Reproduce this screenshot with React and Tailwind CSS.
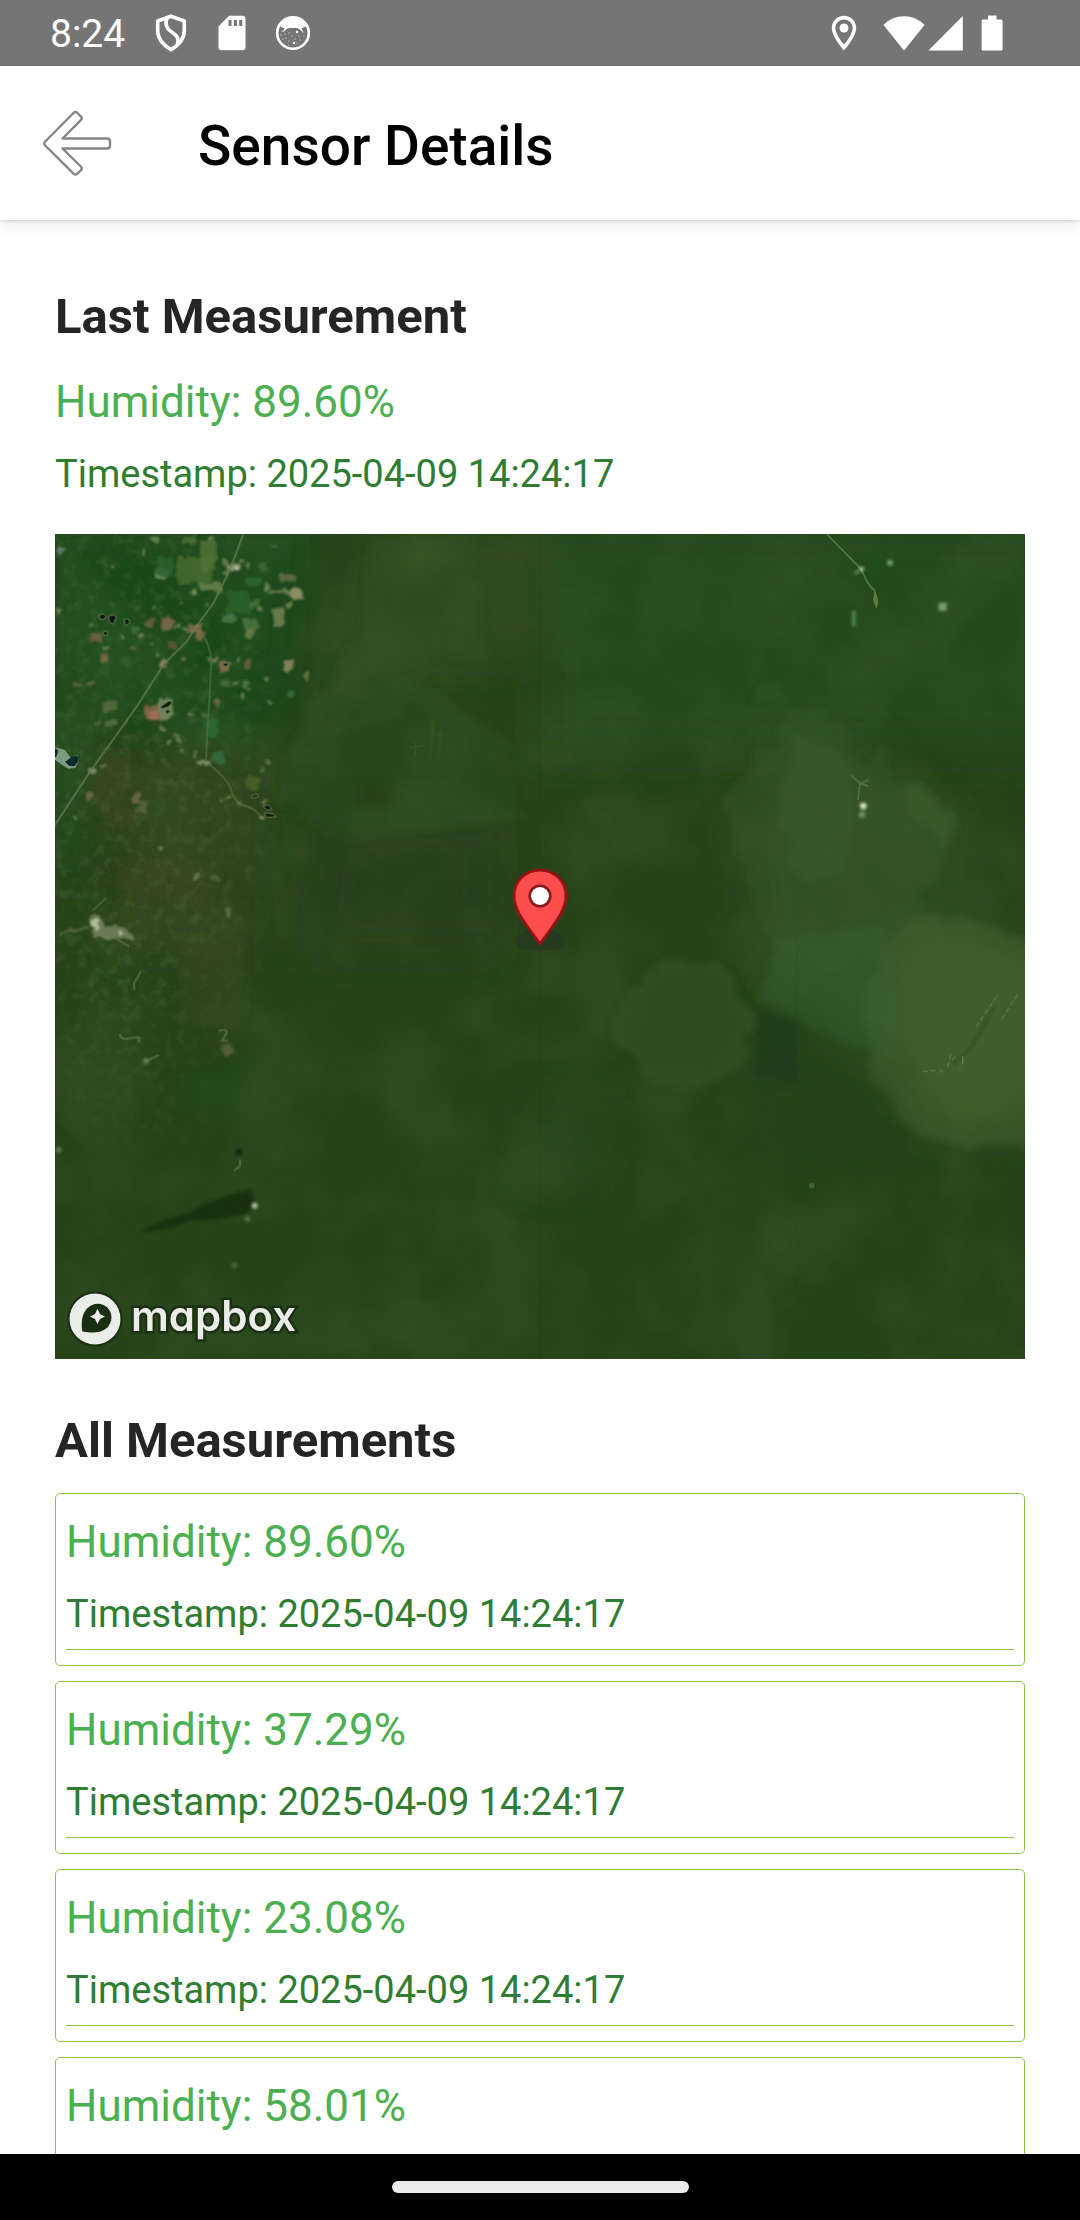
import React from "react";

const READINGS = [
  { humidity: "89.60%", timestamp: "2025-04-09 14:24:17" },
  { humidity: "37.29%", timestamp: "2025-04-09 14:24:17" },
  { humidity: "23.08%", timestamp: "2025-04-09 14:24:17" },
  { humidity: "58.01%", timestamp: "2025-04-09 14:24:17" },
];

function StatusBar() {
  return (
    <div className="flex h-[66px] shrink-0 items-center justify-between bg-[#757575] pr-[76px] pl-[50px] text-white">
      <div className="flex items-center">
        <span className="pt-[2px] text-[39px] leading-[48px]">8:24</span>
        <svg className="ml-[30px] h-[38px] w-[32px]" viewBox="0 0 32 38" fill="none" stroke="currentColor" strokeWidth="3.6" strokeLinejoin="round">
          <path d="M16 2.2 29.3 7v9.5c0 8-5.300 14.500-13.300 19.200C8 31 2.700 24.500 2.700 16.500V7z" />
          <path d="M12 4c-2 5-1.500 9.500 4 13.500 5.500 4 8.500 6 6.500 12.500" />
        </svg>
        <svg className="ml-[31px] h-[36px] w-[28px]" viewBox="0 0 28 36" fill="currentColor">
          <path fillRule="evenodd" d="M11 .8h13.500a3 3 0 0 1 3 3v28.400a3 3 0 0 1-3 3h-21a3 3 0 0 1-3-3V11.500zM10.500 5v6h3V5zm5.400 0v6h3V5zm5.300 0v6h3V5z" />
        </svg>
        <svg className="ml-[29px] h-[36px] w-[36px]" viewBox="0 0 36 36" fill="currentColor">
          <circle cx="18" cy="18" r="15.800" fill="none" stroke="currentColor" strokeWidth="2.600" />
          <path d="M5 11C8 4 13 2 18 2s10 2 13 9c-1.500 1.500-3 2-4.500 2l1.700 4.500-4-3.500c-2.500-1.500-4-1-6.200-1s-3.700-.500-6.200 1l-4 3.500L9.500 13C8 13 6.500 12.500 5 11z" />
          {[[7, 16], [6, 20], [10, 19], [14, 18], [11, 23], [8, 24], [14, 26], [17, 21], [20, 24], [24, 21], [28, 17], [29, 21], [25, 25], [22, 28], [14, 30]].map(([x, y]) => (
            <circle key={x + "-" + y} cx={x} cy={y} r="0.6" />
          ))}
          <circle cx="22" cy="17" r="1.200" />
          <circle cx="19" cy="28" r="1.200" />
        </svg>
      </div>
      <div className="flex items-center">
        <svg className="h-[36px] w-[26px]" viewBox="0 0 26 36" fill="currentColor">
          <path fillRule="evenodd" d="M13 .8C6.300.800.800 6.100.800 12.900.800 21.900 13 35.300 13 35.300s12.200-13.400 12.200-22.400C25.200 6.100 19.700.800 13 .8zm0 3.600c4.900 0 8.600 3.800 8.600 8.500 0 5.300-5.500 12.800-8.600 16.700-3.100-3.900-8.600-11.400-8.600-16.700 0-4.700 3.700-8.500 8.600-8.500z" />
          <circle cx="13" cy="13" r="4.500" />
        </svg>
        <svg className="ml-[26px] h-[36px] w-[42px]" viewBox="0 0 42 36" fill="currentColor">
          <path d="M.5 10C6 4.500 13 1.200 21 1.200S36 4.500 41.500 10L21 35.500z" />
        </svg>
        <svg className="ml-[3px] h-[36px] w-[35px]" viewBox="0 0 35 36" fill="currentColor">
          <path d="M.5 35.500 34.800 1v34.500z" />
        </svg>
        <svg className="mr-[1px] ml-[18px] h-[36px] w-[22px]" viewBox="0 0 22 36" fill="currentColor">
          <path d="M7 .5h8.500v4H20a1.600 1.600 0 0 1 1.600 1.600v27.800a1.600 1.600 0 0 1-1.600 1.600H2.200a1.600 1.600 0 0 1-1.600-1.600V6.100a1.600 1.600 0 0 1 1.600-1.600H7z" />
        </svg>
      </div>
    </div>
  );
}

function Header() {
  return (
    <header className="z-10 flex h-[154px] shrink-0 items-center bg-white pl-[42px] shadow-[0_1px_3px_rgba(0,0,0,0.16),0_6px_16px_rgba(0,0,0,0.07)]">
      <button type="button" aria-label="Back" className="block">
        <svg className="h-[68px] w-[70px]" viewBox="0 0 70 68" fill="#fff" stroke="#868686" strokeWidth="2.400" strokeLinejoin="round">
          <path d="M3.200 32.500 31.500 4q2-2 4 0l3.300 3.300q1.800 1.900 0 3.800L20.500 29.500H65q3 0 3 3v4q0 3-3 3H20.500L38.800 57.500q1.800 1.900 0 3.800l-3.300 3.300q-2 2-4 0L3.200 36.500q-2-2 0-4z" />
        </svg>
      </button>
      <h1 className="ml-[86px] pt-[6px] text-[55px] leading-[64px] font-medium text-black">Sensor Details</h1>
    </header>
  );
}

// Fields, clearings and settlements: [x, y, width, height, colour]
const NW_FIELDS = [
  [412, 110, 105, 82, "#46692f"], [425, 45, 50, 28, "#4d7034"], [480, 60, 48, 90, "#4f7134"], [478, 188, 72, 24, "#66804b"], [345, 150, 35, 30, "#7c9068"],
  [350, 115, 50, 55, "#2f6130"], [560, 128, 46, 26, "#8f9678"], [582, 134, 16, 14, "#d2cdb7"], [660, 130, 24, 26, "#41683a"], [715, 165, 52, 18, "#5f6f42"],
  [752, 205, 36, 36, "#93966a"], [690, 208, 70, 12, "#6d8050"], [675, 195, 14, 18, "#789060"], [700, 265, 34, 52, "#6f8052"], [630, 240, 26, 22, "#42713b"],
  [608, 295, 44, 36, "#4b7240"], [616, 325, 28, 26, "#6a7c4a"], [540, 282, 46, 22, "#47794a"], [616, 170, 50, 28, "#2f6630"], [560, 210, 70, 70, "#275f2a"],
  [450, 208, 16, 18, "#7d935e"], [312, 295, 28, 24, "#6f5c3b"], [362, 297, 38, 28, "#7d6848"], [443, 310, 48, 30, "#8a6b4e"], [468, 335, 28, 24, "#8a6b4e"],
  [150, 335, 34, 34, "#6e5f3e"], [182, 400, 24, 28, "#7a6a45"], [385, 362, 28, 24, "#5d5a38"], [262, 380, 24, 14, "#6b6341"], [360, 420, 22, 22, "#96856a"],
  [540, 424, 30, 32, "#8d6f4c"], [612, 422, 24, 26, "#6f6140"], [732, 420, 32, 30, "#87855e"], [545, 482, 30, 20, "#4d6b40"], [794, 456, 12, 24, "#7f8255"],
  [100, 488, 22, 12, "#5b6340"], [136, 488, 26, 12, "#6a6a43"], [188, 545, 42, 28, "#546b3f"], [162, 600, 20, 14, "#4e673c"], [194, 600, 38, 20, "#587145"],
  [312, 555, 50, 40, "#846646"], [360, 535, 38, 60, "#768a62"], [330, 572, 26, 22, "#a1705a"], [524, 535, 18, 26, "#6b6a44"], [498, 598, 34, 55, "#2e6a32"],
  [604, 482, 22, 26, "#4c7a45"], [735, 514, 24, 20, "#357041"], [356, 616, 14, 20, "#5a7045"], [410, 648, 16, 24, "#6c7c4c"], [476, 722, 36, 14, "#839273"],
  [512, 694, 42, 32, "#35683a"], [275, 818, 28, 30, "#6b6747"], [292, 846, 26, 34, "#59643f"], [138, 815, 16, 24, "#6d6843"], [142, 742, 24, 20, "#829078"],
  [655, 892, 18, 14, "#99a37b"], [620, 770, 38, 44, "#485f27"], [558, 1160, 14, 30, "#5b714c"], [512, 1066, 28, 18, "#50683c"], [272, 318, 24, 20, "#3e6d42"],
  [500, 408, 34, 16, "#7b7d55"], [484, 576, 26, 18, "#4c6c3e"], [694, 72, 16, 10, "#4e7542"], [50, 85, 20, 20, "#64816a"], [335, 52, 16, 14, "#64834b"],
];

const NW_WATER = [
  "M178 285l12-4 8 8-6 10-12-2z", "M206 288l16-4 6 8-8 20-10-4z", "M252 298l12-2 6 12-12 8z", "M190 335l10-2 4 10-10 4z", "M362 560l26-18 8 6-10 12-20 6z", "M376 572l10-4 4 8-10 6z",
  "M550 430l12-2 2 8-12 4z", "M636 826l16-4 2 8-18 4z", "M670 858l16-4 10 14-14 2z", "M674 878l26 4 8 8-28 2z",
];

// Small specks of cleared land: [x, y]
const NW_SPECKS = [
  [205, 132], [415, 240], [492, 248], [336, 258], [240, 342], [300, 345], [330, 370], [345, 398], [420, 412], [190, 372], [148, 310], [404, 318], [430, 322], [590, 415], [672, 470], [600, 525],
  [680, 545], [376, 656], [398, 640], [418, 686], [460, 695], [620, 500], [600, 115], [614, 128], [550, 120], [552, 155], [540, 830], [560, 826], [598, 846], [100, 885], [352, 982], [460, 1066],
  [674, 720], [660, 745], [510, 45], [300, 90], [652, 260], [742, 250], [580, 488], [360, 625], [448, 575], [185, 735], [670, 838], [48, 265],
];

function SatelliteImage() {
  return (
    <svg className="block h-full w-full" viewBox="0 0 970 825" preserveAspectRatio="xMidYMid slice" role="img" aria-label="Satellite map of the sensor location">
      <defs>
        <filter id="haze" x="-50%" y="-50%" width="200%" height="200%"><feGaussianBlur stdDeviation="60" /></filter>
        <filter id="soft" x="-20%" y="-20%" width="140%" height="140%"><feGaussianBlur stdDeviation="12" /></filter>
        <filter id="edge" x="-10%" y="-10%" width="120%" height="120%"><feGaussianBlur stdDeviation="5" /></filter>
        <filter id="fields" x="-5%" y="-5%" width="110%" height="110%">
          <feTurbulence type="fractalNoise" baseFrequency="0.11" numOctaves="3" seed="5" result="n" />
          <feDisplacementMap in="SourceGraphic" in2="n" scale="9" xChannelSelector="R" yChannelSelector="G" />
          <feGaussianBlur stdDeviation="1" />
        </filter>
        <filter id="rough" x="-10%" y="-10%" width="120%" height="120%">
          <feTurbulence type="fractalNoise" baseFrequency="0.035" numOctaves="3" seed="9" result="n" />
          <feDisplacementMap in="SourceGraphic" in2="n" scale="24" xChannelSelector="R" yChannelSelector="G" />
          <feGaussianBlur stdDeviation="3" />
        </filter>
        <filter id="canopy" x="0" y="0" width="100%" height="100%">
          <feTurbulence type="fractalNoise" baseFrequency="0.012" numOctaves="4" seed="3" />
          <feColorMatrix values="0 0 0 0 0.25  0 0 0 0 0.36  0 0 0 0 0.13  1.400 0 0 0 -0.500" />
        </filter>
        <filter id="undergrowth" x="0" y="0" width="100%" height="100%">
          <feTurbulence type="fractalNoise" baseFrequency="0.09" numOctaves="3" seed="12" />
          <feColorMatrix values="0 0 0 0 0.08  0 0 0 0 0.18  0 0 0 0 0.05  2.200 0 0 0 -1.050" />
        </filter>
        <radialGradient id="nwFade" cx="0.3" cy="0.4" r="0.7"><stop offset="0.5" stopColor="#fff" /><stop offset="1" stopColor="#000" /></radialGradient>
        <mask id="nwMask"><rect width="250" height="620" fill="url(#nwFade)" /></mask>
      </defs>

      <rect width="970" height="825" fill="#27431b" />

      {/* North-west quadrant, drawn at 3 units per map unit */}
      <g transform="translate(-15 -14) scale(.3333333)">
        <g filter="url(#haze)">
          <path d="M0 0H820L780 520 640 680 300 640 0 560z" fill="#1f4a1a" />
          <path d="M0 500H200L120 1100 0 1100z" fill="#20471a" />
          <path d="M980 0H1500V420L940 400z" fill="#2e4a1e" />
          <path d="M1500 0h1600v700h-1600z" fill="#28481c" />
          <path d="M860 880h500v420h-560z" fill="#25411b" />
          <path d="M170 700h460v600h-400z" fill="#2d441d" />
        </g>
        <g filter="url(#soft)">
          <path d="M995 60 1300 50 1340 420 1180 400 1080 600 800 660 790 560 880 500 920 380 970 370z" fill="#30501f" opacity=".5" />
          <path d="M800 560l300-100 300 200 40 240-540 60-200-120z" fill="#2c4b1f" opacity=".5" />
          <path d="M180 690l90 20 20 80-50 50 60 60-70 30-80-90z" fill="#43471f" opacity=".5" />
          <path d="M210 1030q160-30 330 20l-40 110-250-20z" fill="#3a3f1e" opacity=".5" />
          <path d="M960 780l90 10 20 70-110 10z" fill="#213c17" opacity=".5" />
        </g>
      </g>

      <rect width="970" height="825" filter="url(#canopy)" opacity=".14" />
      <g mask="url(#nwMask)"><rect width="260" height="640" filter="url(#undergrowth)" opacity=".4" /></g>

      <g filter="url(#fields)">
        <g transform="translate(-15 -14) scale(.3333333)">
          {NW_FIELDS.map(([x, y, w, h, fill]) => (
            <rect key={x + "-" + y} x={x} y={y} width={w} height={h} rx="8" fill={fill} opacity=".9" />
          ))}
          {NW_SPECKS.map(([x, y]) => (
            <rect key={x + "-" + y} x={x} y={y} width="13" height="12" rx="4" fill="#6c7d50" opacity=".95" />
          ))}
        </g>
      </g>
      <g transform="translate(-15 -14) scale(.3333333)" fill="none" strokeLinecap="round">
        <path d="M610 42 585 110 550 190 520 250 470 318 440 365 372 432 290 560 215 665 150 755 45 915" stroke="#66804f" strokeWidth="6" opacity=".7" />
        <path d="M486 340q26 40 28 80l-6 120-6 100-4 80" stroke="#4a7040" strokeWidth="6" opacity=".7" />
        <path d="M510 735q50 40 62 70 10 45 50 55 28 8 42 34" stroke="#5d713d" strokeWidth="6" opacity=".7" />
        <path d="M45 682 75 690l18 24 20-10 3 22-10 18-22 2-39-26z" fill="#7f9c82" />
        <path d="M45 684l10 8-6 18-4 2zM75 725l20-14 18-4 2 18-12 14-16-2z" fill="#062c30" />
        <path d="M160 1170l38-36" stroke="#4f6a45" strokeWidth="6" opacity=".6" />
        <path d="M1112 682l20-2 18-4M1125 668v34" stroke="#4c6a2b" strokeWidth="5" opacity=".35" />
        <path d="M1180 600l-10 110M1200 640l-6 70" stroke="#3d5c1e" strokeWidth="12" opacity=".35" />
        {NW_WATER.map((d) => (
          <path key={d} d={d} fill="#07180d" stroke="#6f7b50" strokeWidth="3" />
        ))}
      </g>
      <g filter="url(#fields)">
        <g transform="translate(-15 -14) scale(.3333333)">
          <path d="M145 1190l30-5 20 30 70 8 15 35-120-5z" fill="#768463" opacity=".85" />
          <path d="M150 1200l22 0 8 24-26-2zM236 1228l14 0 4 16-16 2z" fill="#b5bf9f" />
          <path d="M60 1245q40-25 85-20" stroke="#56683e" strokeWidth="9" fill="none" />
        </g>
      </g>

      {/* North-east quadrant */}
      <g transform="translate(485 -14) scale(.3333333)">
        <g filter="url(#haze)">
          <path d="M760 600 1000 700 1240 900 1300 1200 1455 1300V1850H1200L1050 1640 760 1520 640 1300 600 900z" fill="#30522a" opacity=".6" />
          <path d="M1100 1220l400 60v500l-300 40-150-300z" fill="#3c5a27" opacity=".9" />
        </g>
      </g>
      <g filter="url(#rough)">
        <g transform="translate(485 -14) scale(.3333333)">
          <path d="M640 520l50-35 50 90 110 0 80 80 30 80 40-50 50 20 20 80 80 20 80 70 20 70-40 110-60 60-30 110-100 80-180 60-160-120-70-180-60-200 40-100 110-80 40-120z" fill="#46683a" opacity=".17" />
          <path d="M760 640l160 60 30 220-40 140-130 30-60-200z" fill="#4a6a3a" opacity=".16" />
          <path d="M1090 780l100 50 50 80-30 80-40-60-60-70z" fill="#557435" opacity=".2" />
          <path d="M1100 1180l100 20 100-10 130 60 60 40v600l-160-10-140-10-110-60-40-110-50-40-20-240z" fill="#526e34" opacity=".3" />
          <path d="M700 1260l340-40 40 420-80-30-100-40-130-60-110-60z" fill="#3a6a3a" opacity=".25" />
        </g>
      </g>
      <g transform="translate(485 -14) scale(.3333333)">
        <path d="M860 42l104 106q20 50 42 66" fill="none" stroke="#4f7b48" strokeWidth="5" />
        <path d="M1000 50l40 60-10 70-50-30z" fill="#1e5020" opacity=".6" filter="url(#soft)" />
        <path d="M1005 215l-4 24 8 24 4-20z" fill="#55763f" stroke="#6b8250" strokeWidth="3" />
        <g filter="url(#edge)">
          <circle cx="965" cy="147" r="7" fill="#b1c9a4" /><circle cx="950" cy="157" r="7" fill="#56824c" />
          <circle cx="1050" cy="128" r="9" fill="#6fa070" />
          <rect x="1196" y="248" width="24" height="24" fill="#7a9c68" />
          <rect x="936" y="272" width="11" height="46" fill="#4f8a5d" />
          <circle cx="970" cy="858" r="10" fill="#dbe8c8" /><circle cx="966" cy="884" r="10" fill="#6c9563" />
        </g>
        <path d="M932 766l30 24 24-10M962 790l22 8M960 790l-6 50" fill="none" stroke="#5b7c45" strokeWidth="5" opacity=".8" />
      </g>

      {/* Southern half */}
      <g transform="translate(485 406) scale(.3333333)">
        <path d="M640 200l130 40 90 80 140 80 60 100 60 90-20 120-300 20-250-130 60-200z" fill="#213f1b" opacity=".4" filter="url(#haze)" />
        <path d="M650 210l125 30v200l-140-40z" fill="#1d391a" opacity=".6" filter="url(#soft)" />
        <path d="M-40 480h220v250h-220z" fill="#2b4924" opacity=".6" filter="url(#haze)" />
      </g>
      <g filter="url(#rough)">
        <path d="M600 430 622 425 640 430 660 428 673 444 682 463 696 474 700 490 690 520 672 538 652 554 630 558 600 553 586 540 580 523 563 508 560 490 562 468 585 450z" fill="#355029" opacity=".75" />
      </g>
      <ellipse cx="630" cy="490" rx="44" ry="40" fill="#2b4a1c" opacity=".6" filter="url(#soft)" />
      <g transform="translate(485 406) scale(.3333333)" fill="none" strokeLinecap="round">
        <path d="M1370 170l-45 65-20 30M1245 350l-25 30M1432 165l-30 45-20 35M1150 395l50-5 15 12M1232 345l-10 40" stroke="#5c7943" strokeWidth="5" strokeDasharray="12 12" opacity=".7" />
        <path d="M1365 200l-70 120-50 50" stroke="#2e4f21" strokeWidth="14" opacity=".4" />
        <path d="M1268 350v22" stroke="#7e9463" strokeWidth="4" opacity=".7" />
        <circle cx="815" cy="737" r="8" fill="#4c7544" opacity=".7" />
      </g>
      <g transform="translate(-15 406) scale(.3333333)">
        <path d="M410 0h200v260H430z" fill="#3b4822" opacity=".4" filter="url(#soft)" />
        <path d="M430 400l200-40-40 160-160-20z" fill="#1f4a1b" opacity=".4" filter="url(#soft)" />
        <path d="M305 876q60-40 140-56 90-55 190-72l8 50-20 20q-90 26-170 22-60 30-148 36z" fill="#182f0e" opacity=".85" filter="url(#edge)" />
        <g filter="url(#edge)">
          <circle cx="644" cy="797" r="9" fill="#b4c79f" /><circle cx="622" cy="836" r="8" fill="#5c7a4b" />
          <circle cx="597" cy="636" r="10" fill="#0e250b" /><circle cx="583" cy="976" r="8" fill="#4f7042" />
          <circle cx="56" cy="630" r="8" fill="#5f8056" /><circle cx="318" cy="363" r="9" fill="#5f8050" />
          <path d="M540 320l30-10 14 26-26 16z" fill="#57603c" />
        </g>
        <path d="M240 284q4 16 22 12t34-4v12M325 360l30-14M538 272q24-6 22 6l-14 24h16M302 96l-20 34v18M215-12l50 30M585 690l15-12v-18" fill="none" stroke="#68794f" strokeWidth="7" opacity=".6" strokeLinecap="round" />
      </g>
      <path d="M742 400v425M485 0v825" stroke="#1e3a18" strokeWidth="1" opacity=".15" />
    </svg>
  );
}

function MapPin() {
  return (
    <svg className="h-[82px] w-[56px]" viewBox="0 0 56 82" role="img" aria-label="Sensor location">
      <ellipse cx="28" cy="73" rx="25" ry="12" fill="#263a20" opacity=".8" />
      <path d="M28 2C13.500 2 2 12.800 2 28c0 16 14.500 31.500 26 48 11.500-16.500 26-32 26-48C54 12.800 42.500 2 28 2z" fill="#fc4e4e" stroke="#951313" strokeWidth="2.800" strokeLinejoin="round" />
      <circle cx="28" cy="28" r="10.300" fill="#fff" stroke="#8b1a1d" strokeWidth="2.600" />
    </svg>
  );
}

function MapboxLogo() {
  return (
    <a href="#mapbox" className="absolute bottom-[12px] left-[12px] flex items-center gap-[8px]">
      <svg className="h-[56px] w-[56px]" viewBox="0 0 56 56">
        <circle cx="28" cy="28" r="27.500" fill="#192d12" />
        <circle cx="28" cy="28" r="25.500" fill="#eaede8" />
        <path d="M15.300 40.500C14 31 15 23 20 17.500c6-6.200 15-6.200 20.500-.800 5.500 5.500 5.300 14.300-.600 20.300-5.600 5.200-15 5.200-24.600 3.500z" fill="#182d11" />
        <path d="M30.500 17.800 33 23l5 2.500-5 2.500-2.500 5.200L28 28l-5-2.500 5-2.500z" fill="#eaede8" />
      </svg>
      <span className="pb-[7px] font-['Inter',sans-serif] text-[42px] leading-[48px] font-semibold text-[#eaede8] [font-feature-settings:'cv11'] [paint-order:stroke_fill] [-webkit-text-stroke:5px_#1b3013]">
        mapbox
      </span>
    </a>
  );
}

function Reading({ humidity, timestamp }) {
  return (
    <>
      <p className="text-[44px] leading-[52px] text-[#4caf50]">Humidity: {humidity}</p>
      <p className="mt-[24px] text-[38px] leading-[44px] text-[#2e7d32]">Timestamp: {timestamp}</p>
    </>
  );
}

export default function App() {
  return (
    <div className="flex h-screen flex-col overflow-hidden bg-white font-['Roboto',sans-serif]">
      <StatusBar />
      <Header />
      <main className="min-h-0 flex-1 overflow-y-auto px-[55px] pt-[67px] [scrollbar-width:none]">
        <section>
          <h2 className="text-[49px] leading-[60px] font-bold text-[#252525]">Last Measurement</h2>
          <div className="mt-[29px]">
            <Reading {...READINGS[0]} />
          </div>
          <div className="relative mt-[38px] h-[825px] overflow-hidden">
            <SatelliteImage />
            <div className="absolute inset-x-0 top-[334px] flex justify-center">
              <MapPin />
            </div>
            <MapboxLogo />
          </div>
        </section>
        <section className="mt-[52px]">
          <h2 className="text-[49px] leading-[60px] font-bold text-[#252525]">All Measurements</h2>
          <ul className="mt-[22px] flex flex-col gap-[15px]">
            {READINGS.map((reading) => (
              <li key={reading.humidity} className="rounded-[5px] border border-[#8bc34a] px-[10px] pt-[22px] pb-[15px]">
                <div className="border-b border-[#8bc34a] pb-[13px]">
                  <Reading {...reading} />
                </div>
              </li>
            ))}
          </ul>
        </section>
      </main>
      <footer className="z-10 flex h-[66px] shrink-0 items-center justify-center bg-black">
        <div className="h-[12px] w-[297px] rounded-full bg-[#ebebeb]" />
      </footer>
    </div>
  );
}
